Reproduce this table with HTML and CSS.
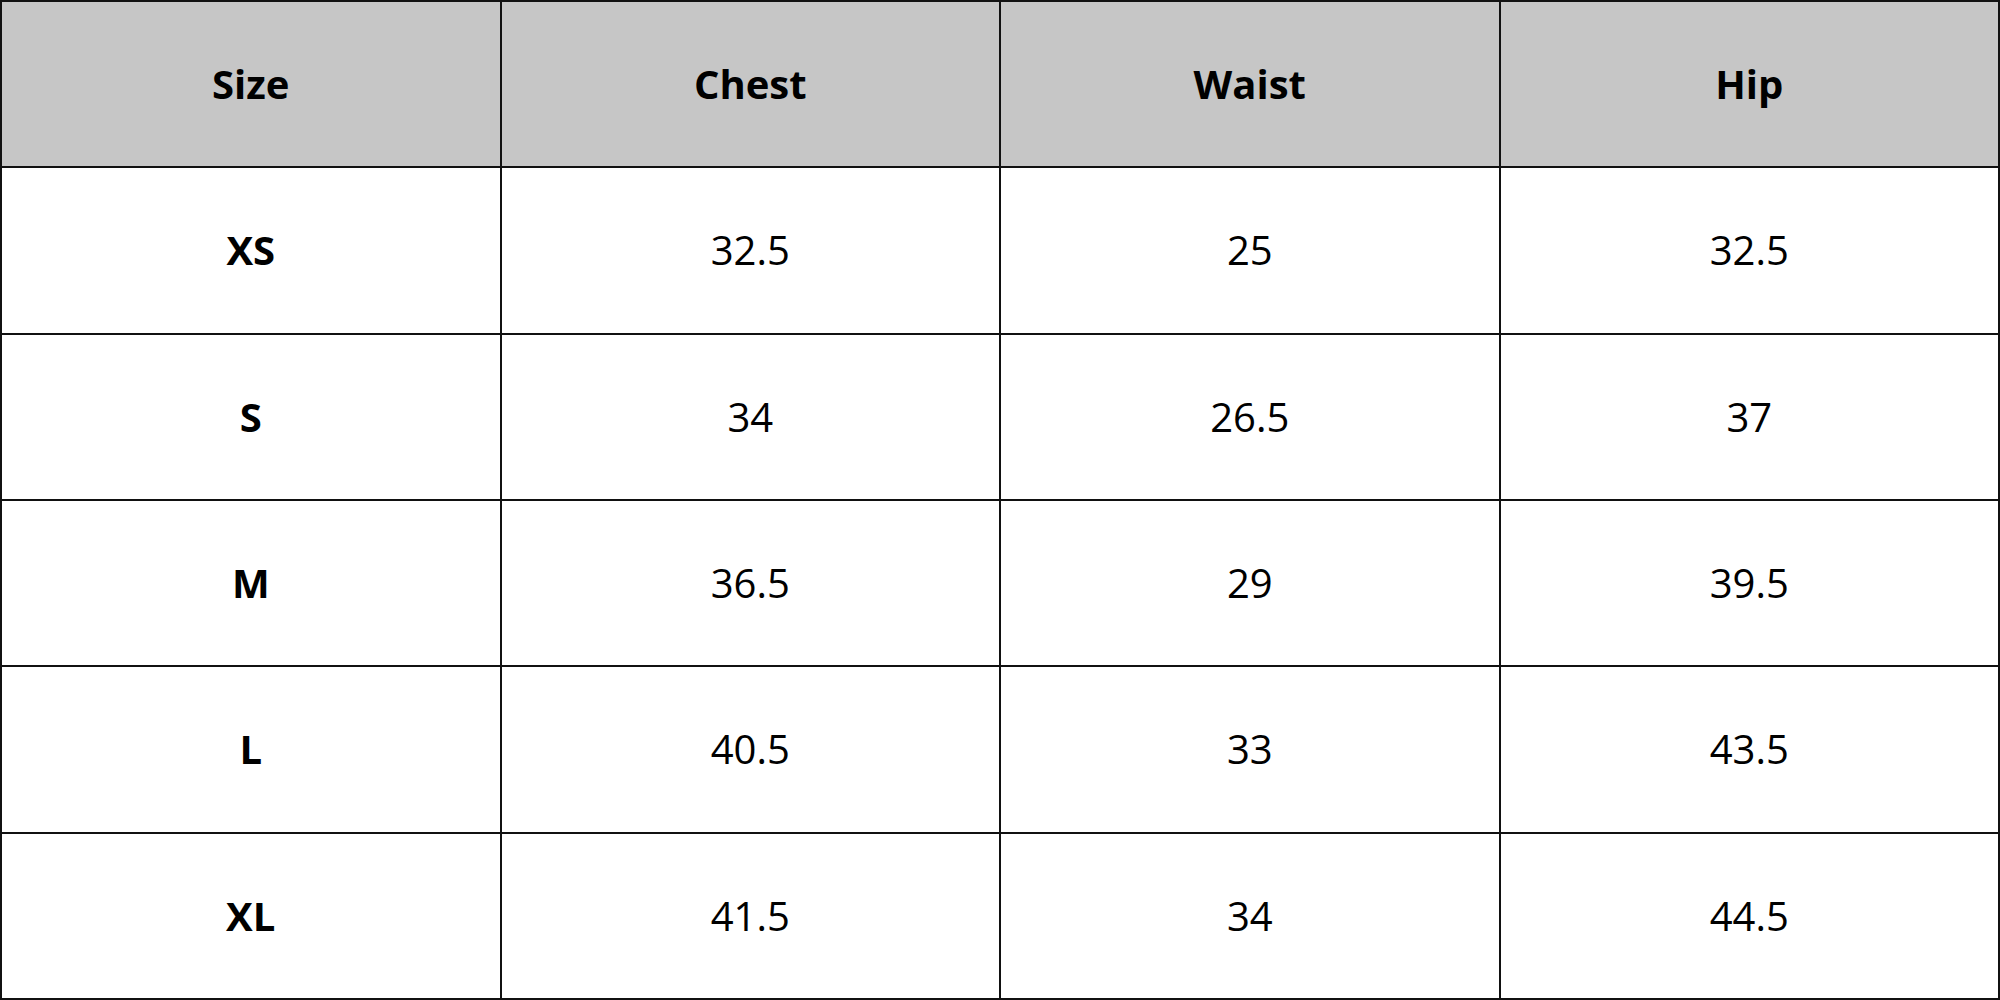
FILE: index.html
```html
<!DOCTYPE html>
<html lang="en">
<head>
<meta charset="utf-8">
<title>Size chart</title>
<link rel="stylesheet" href="styles.css">
</head>
<body>
<div class="chart">
  <div class="cell head">Size</div>
  <div class="cell head">Chest</div>
  <div class="cell head">Waist</div>
  <div class="cell head">Hip</div>

  <div class="cell label">XS</div><div class="cell">32.5</div><div class="cell">25</div><div class="cell">32.5</div>
  <div class="cell label">S</div><div class="cell">34</div><div class="cell">26.5</div><div class="cell">37</div>
  <div class="cell label">M</div><div class="cell">36.5</div><div class="cell">29</div><div class="cell">39.5</div>
  <div class="cell label">L</div><div class="cell">40.5</div><div class="cell">33</div><div class="cell">43.5</div>
  <div class="cell label">XL</div><div class="cell">41.5</div><div class="cell">34</div><div class="cell">44.5</div>
</div>
</body>
</html>
```

FILE: styles.css
```css
html, body {
  margin: 0;
  padding: 0;
  background: #ffffff;
}

.chart {
  box-sizing: border-box;
  width: 2000px;
  height: 1000px;
  padding: 2px;
  display: grid;
  grid-template-columns: repeat(4, 1fr);
  grid-template-rows: repeat(6, 1fr);
  gap: 2px;
  background: #111111;
  font-family: "Open Sans", "Liberation Sans", sans-serif;
  color: #000000;
}

.cell {
  display: flex;
  align-items: center;
  justify-content: center;
  background: #ffffff;
  font-size: 40px;
  font-weight: 400;
  line-height: 1;
}

.head {
  background: #c6c6c6;
  font-weight: 700;
}

.label {
  font-weight: 700;
}
```
